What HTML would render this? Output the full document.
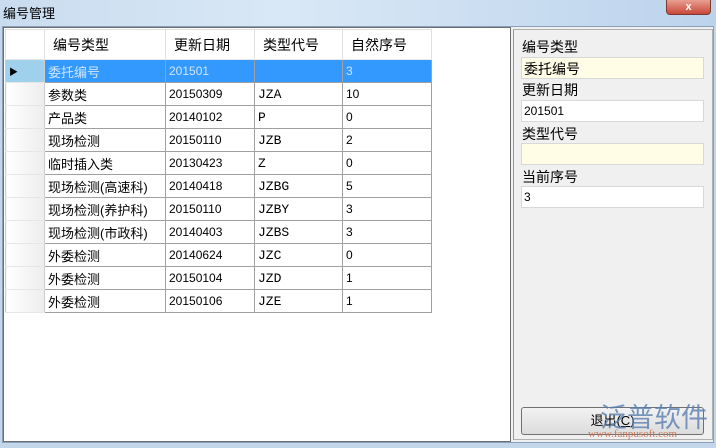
<!DOCTYPE html>
<html><head><meta charset="utf-8"><style>
*{margin:0;padding:0;box-sizing:border-box}
body{width:716px;height:448px;overflow:hidden;background:#c4d6ea;font-family:"Liberation Sans","Noto Sans CJK SC",sans-serif;font-size:13px;position:relative}
.title{position:absolute;left:0;top:0;width:716px;height:27px;background:linear-gradient(90deg,#c9dcef 0%,#d9e8f6 40%,#bcd3ec 100%)}
.title span{position:absolute;left:3px;top:3px;font-size:13px;color:#000}
.close{position:absolute;left:666px;top:-1px;width:45px;height:16px;border:1px solid #7a3a32;border-radius:0 0 4px 4px;background:linear-gradient(#e8a090,#c9473a);color:#fff;text-align:center;font-weight:bold;font-size:11px;line-height:14px}
.client{position:absolute;left:2px;top:26px;width:712px;height:417px;background:#f0f0f0;border:1px solid #8aa0b8}
.grid{position:absolute;left:3px;top:27px;width:508px;height:415px;background:#fff;border:1px solid #6e6e6e}
table{position:absolute;left:1px;top:1px;border-collapse:collapse}
td{height:23px;border:1px solid #a0a0a0;padding:0 3px;white-space:nowrap;font-size:13px}
td.n{font-size:12px}
tr.h td{height:30px;background:#fff;border-color:#e0e0e0;border-bottom:1px solid #e8e8e8;font-size:14px;padding-left:8px}
td.rh{width:39px;background:linear-gradient(90deg,#fff,#ededed);border-color:#e6e6e6 #ccc;font-size:9px}
td.m{font-family:"Liberation Mono",monospace;font-size:13px}
tr.sel td{background:#3399ff;color:#cfe6ff}
tr.sel td.rh{background:#9fd0ec;color:#000}
.panel{position:absolute;left:513px;top:29px;width:200px;height:411px;border:1px solid #b0b0b0;border-left-color:#999}
.lbl{position:absolute;left:8px;font-size:14px;color:#000}
.box{position:absolute;left:7px;width:183px;height:22px;border:1px solid #d8d8d8;padding:3px 2px;font-size:12px}
.btn{position:absolute;left:7px;top:377px;width:183px;height:28px;border:1px solid #707070;border-radius:3px;background:linear-gradient(#f2f2f2,#dcdcdc);text-align:center;line-height:26px;font-size:13px}
.wm{position:absolute;left:600px;top:402px;color:#5a7fb0;font-size:27px;white-space:nowrap;line-height:32px;opacity:.8}
.wm2{position:absolute;left:588px;top:428px;color:#c56a4a;font-size:11px;white-space:nowrap;font-family:"Liberation Serif",serif;opacity:.85}
</style></head><body>
<div class="title"><span>编号管理</span></div>
<div class="close">x</div>
<div class="client"></div>
<div class="grid">
<table>
<tr class="h"><td class="rh" style="background:#fff"></td><td style="width:121px">编号类型</td><td style="width:89px">更新日期</td><td style="width:88px">类型代号</td><td style="width:89px">自然序号</td></tr>
<tr class="sel"><td class="rh">▶</td><td>委托编号</td><td class="n">201501</td><td class="m"></td><td class="n">3</td></tr>
<tr><td class="rh"></td><td>参数类</td><td class="n">20150309</td><td class="m">JZA</td><td class="n">10</td></tr>
<tr><td class="rh"></td><td>产品类</td><td class="n">20140102</td><td class="m">P</td><td class="n">0</td></tr>
<tr><td class="rh"></td><td>现场检测</td><td class="n">20150110</td><td class="m">JZB</td><td class="n">2</td></tr>
<tr><td class="rh"></td><td>临时插入类</td><td class="n">20130423</td><td class="m">Z</td><td class="n">0</td></tr>
<tr><td class="rh"></td><td>现场检测(高速科)</td><td class="n">20140418</td><td class="m">JZBG</td><td class="n">5</td></tr>
<tr><td class="rh"></td><td>现场检测(养护科)</td><td class="n">20150110</td><td class="m">JZBY</td><td class="n">3</td></tr>
<tr><td class="rh"></td><td>现场检测(市政科)</td><td class="n">20140403</td><td class="m">JZBS</td><td class="n">3</td></tr>
<tr><td class="rh"></td><td>外委检测</td><td class="n">20140624</td><td class="m">JZC</td><td class="n">0</td></tr>
<tr><td class="rh"></td><td>外委检测</td><td class="n">20150104</td><td class="m">JZD</td><td class="n">1</td></tr>
<tr><td class="rh"></td><td>外委检测</td><td class="n">20150106</td><td class="m">JZE</td><td class="n">1</td></tr>
</table>
</div>
<div class="panel">
<div class="lbl" style="top:7px">编号类型</div>
<div class="box" style="top:27px;background:#fffde6;font-size:14px;padding-top:1px">委托编号</div>
<div class="lbl" style="top:50px">更新日期</div>
<div class="box" style="top:70px;background:#fff">201501</div>
<div class="lbl" style="top:94px">类型代号</div>
<div class="box" style="top:113px;background:#fffde6"></div>
<div class="lbl" style="top:137px">当前序号</div>
<div class="box" style="top:156px;background:#fff">3</div>
<div class="btn">退出(<u>C</u>)</div>
</div>
<div class="wm">泛普软件</div>
<div class="wm2">www.fanpusoft.com</div>
</body></html>
